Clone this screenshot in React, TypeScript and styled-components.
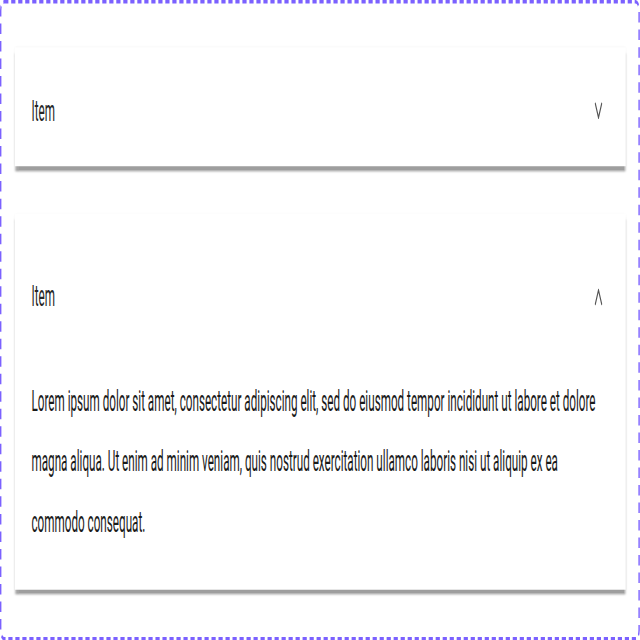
import React, { useState } from "react";
import styled, { createGlobalStyle } from "styled-components";

// the reference is a page drawn at about 914x366 and stretched to 640x640
const SCALE_X = 0.7;
const SCALE_Y = 1.75;

const GlobalStyle = createGlobalStyle`
  html {
    overflow: hidden;
  }
  body {
    margin: 0;
    padding: 0;
    min-height: 640px;
    background: #ffffff;
  }
`;

const Stage = styled.div`
  box-sizing: border-box;
  width: ${640 / SCALE_X}px;
  height: ${640 / SCALE_Y}px;
  transform: scale(${SCALE_X}, ${SCALE_Y});
  transform-origin: 0 0;
  border: 2px dashed #7b61ff;
  border-radius: 6px;
  padding: 25px 18px 0 19px;
  display: flex;
  flex-direction: column;
  gap: 27px;
  font-family: Roboto, "Liberation Sans", sans-serif;
`;

const Card = styled.section`
  background: #ffffff;
  box-shadow: 0 3px 2px rgba(0, 0, 0, 0.38), 0 0 2px rgba(0, 0, 0, 0.08);
`;

const Header = styled.button<{ $open: boolean }>`
  box-sizing: border-box;
  width: 100%;
  height: ${(p) => (p.$open ? 90 : 68)}px;
  padding: ${(p) => (p.$open ? 5 : 4)}px 33px 0 24px;
  display: flex;
  align-items: center;
  justify-content: space-between;
  border: none;
  background: transparent;
  cursor: pointer;
  font: inherit;
  font-size: 16.7px;
  color: #262626;
  text-align: left;
`;

const Chevron = styled.svg<{ $open: boolean }>`
  width: 12px;
  height: 10px;
  flex: none;
  transform: rotate(${(p) => (p.$open ? 180 : 0)}deg);
`;

const Body = styled.p`
  margin: 0;
  padding: 1px 36px 21px 24px;
  font-size: 16.7px;
  line-height: 34.3px;
  color: #1a1a1a;
`;

const LOREM =
  "Lorem ipsum dolor sit amet, consectetur adipiscing elit, sed do eiusmod tempor incididunt ut labore et dolore magna aliqua. Ut enim ad minim veniam, quis nostrud exercitation ullamco laboris nisi ut aliquip ex ea commodo consequat.";

interface ItemProps {
  title: string;
  text: string;
  defaultOpen?: boolean;
}

const AccordionItem = ({ title, text, defaultOpen = false }: ItemProps) => {
  const [open, setOpen] = useState<boolean>(defaultOpen);

  return (
    <Card>
      <Header $open={open} onClick={() => setOpen(!open)}>
        <span>{title}</span>
        <Chevron $open={open} viewBox="0 0 12 10">
          <polyline
            points="1.2,0.8 6,9.2 10.8,0.8"
            fill="none"
            stroke="#555555"
            strokeWidth="1.5"
          />
        </Chevron>
      </Header>
      {open && <Body>{text}</Body>}
    </Card>
  );
};

export default function App() {
  return (
    <>
      <GlobalStyle />
      <Stage>
        <AccordionItem title="Item" text={LOREM} />
        <AccordionItem title="Item" text={LOREM} defaultOpen />
      </Stage>
    </>
  );
}
